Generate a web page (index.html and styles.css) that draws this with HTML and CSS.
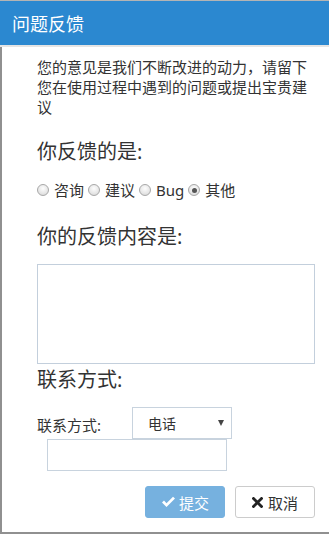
FILE: index.html
```html
<!DOCTYPE html>
<html lang="zh-CN">
<head>
<meta charset="utf-8">
<title>问题反馈</title>
<link rel="stylesheet" href="styles.css">
</head>
<body>
<div class="dialog">
  <div class="header"><span class="title">问题反馈</span></div>
  <div class="content">
    <p class="intro">您的意见是我们不断改进的动力，请留下您在使用过程中遇到的问题或提出宝贵建议</p>
    <h2 class="heading h-type">你反馈的是:</h2>
    <div class="radios">
      <label class="radio"><span class="dot"></span>咨询</label>
      <label class="radio"><span class="dot"></span>建议</label>
      <label class="radio"><span class="dot"></span>Bug</label>
      <label class="radio"><span class="dot checked"></span>其他</label>
    </div>
    <h2 class="heading h-content">你的反馈内容是:</h2>
    <div class="textarea"></div>
    <h2 class="heading h-contact">联系方式:</h2>
    <div class="contact-row">
      <span class="contact-label">联系方式:</span>
      <div class="select"><span>电话</span><span class="arrow"></span></div>
    </div>
    <div class="input"></div>
    <div class="actions">
      <button class="btn btn-primary"><svg class="icon" width="15" height="12" viewBox="0 0 15 12"><path d="M1 6.5 L5.5 11 L14 2.5 L12 0.8 L5.5 7.2 L3 4.6 Z" fill="#fff"/></svg>提交</button>
      <button class="btn btn-default"><svg class="icon icon-x" width="11" height="11" viewBox="0 0 11 11"><path d="M1.5 1.5 L9.5 9.5 M9.5 1.5 L1.5 9.5" stroke="#222" stroke-width="2.8" stroke-linecap="square"/></svg>取消</button>
    </div>
  </div>
</div>
</body>
</html>
```

FILE: styles.css
```css
* { box-sizing: border-box; }
html, body { margin: 0; padding: 0; background: #fff; }
body {
  width: 329px;
  height: 534px;
  overflow: hidden;
  font-family: "Noto Sans", "Noto Sans CJK SC", sans-serif;
  color: #333;
}
.dialog {
  width: 329px;
  height: 534px;
  border-top: 1px solid #b4b4b4;
  display: flex;
  flex-direction: column;
}
.header {
  height: 46px;
  background: #2b88d0;
  border-bottom: 2px solid #e4e4e4;
  display: flex;
  align-items: center;
  padding-left: 12px;
  flex-shrink: 0;
}
.title {
  color: #fff;
  font-size: 18px;
  line-height: 24px;
  margin-top: 1px;
}
.content {
  flex: 1;
  border-left: 2px solid #909090;
  border-bottom: 2px solid #909090;
  padding: 10px 14px 0 35px;
}
.intro {
  margin: 0;
  font-size: 15px;
  line-height: 20px;
  width: 272px;
}
.heading {
  margin: 0;
  font-size: 20px;
  font-weight: normal;
  line-height: 28px;
}
.h-type { margin-top: 21px; }
.h-content { margin-top: 23px; }
.h-contact { margin-top: 2px; }
.radios {
  margin-top: 14px;
  display: flex;
  align-items: center;
  font-size: 15px;
  line-height: 20px;
}
.radio {
  display: flex;
  align-items: center;
  margin-right: 4px;
}
.dot {
  width: 12px;
  height: 12px;
  border-radius: 50%;
  border: 1px solid #a8a8a8;
  background: radial-gradient(circle at 50% 35%, #fdfdfd 0%, #e6e6e6 60%, #d2d2d2 100%);
  margin-right: 5px;
  position: relative;
}
.dot.checked::after {
  content: "";
  position: absolute;
  left: 2.5px;
  top: 2.5px;
  width: 5px;
  height: 5px;
  border-radius: 50%;
  background: #555;
}
.textarea {
  margin-top: 13px;
  width: 278px;
  height: 100px;
  border: 1px solid #c3cfdc;
}
.contact-row {
  margin-top: 13px;
  display: flex;
  align-items: center;
}
.contact-label {
  font-size: 15px;
  line-height: 20px;
  width: 95px;
  margin-top: 4px;
}
.select {
  width: 100px;
  height: 32px;
  border: 1px solid #c8d3de;
  display: flex;
  align-items: center;
  justify-content: space-between;
  padding: 0 7px 0 15px;
  font-size: 14px;
}
.arrow {
  width: 0;
  height: 0;
  border-left: 3.5px solid transparent;
  border-right: 3.5px solid transparent;
  border-top: 6px solid #444;
  margin-top: -1px;
}
.input {
  margin-left: 10px;
  width: 180px;
  height: 32px;
  border: 1px solid #c8d3de;
}
.actions {
  margin-top: 15px;
  display: flex;
  justify-content: flex-end;
  gap: 10px;
  width: 278px;
}
.btn {
  width: 80px;
  height: 32px;
  border-radius: 3px;
  font-family: "Noto Sans", "Noto Sans CJK SC", sans-serif;
  font-size: 15px;
  display: flex;
  align-items: center;
  justify-content: center;
  padding: 0;
}
.btn-primary {
  background: #76b1df;
  border: 1px solid #76b1df;
  color: #fff;
}
.btn-default {
  background: #fff;
  border: 1px solid #ccc;
  color: #333;
}
.icon { margin-right: 3px; }
.icon-x { margin-right: 5px; }
```
